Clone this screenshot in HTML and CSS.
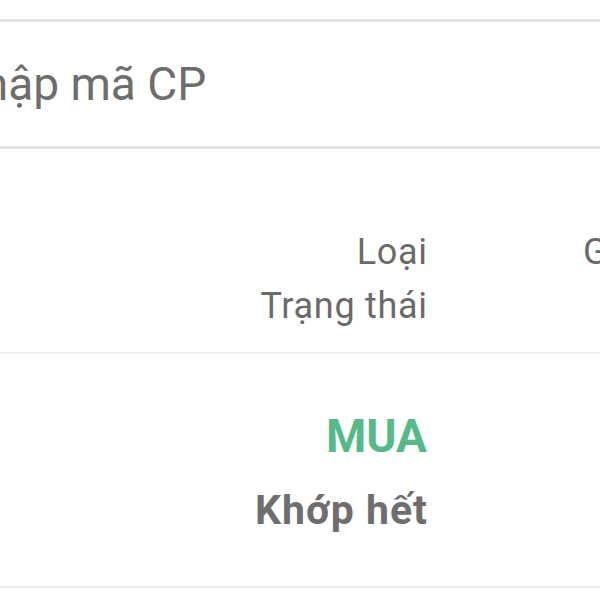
FILE: index.html
```html
<!DOCTYPE html>
<html lang="vi">
<head>
<meta charset="utf-8">
<link rel="stylesheet" href="styles.css">
</head>
<body>
<div class="screen">
  <div class="top-gap"></div>
  <div class="search">
    <span class="placeholder">Nhập mã CP</span>
  </div>
  <div class="table-head">
    <div class="col col-type">
      <div class="head-line">Loại</div>
      <div class="head-line">Trạng thái</div>
    </div>
    <div class="col col-price">
      <div class="head-line">Giá đặt</div>
    </div>
  </div>
  <div class="table-row">
    <div class="col col-type">
      <div class="side buy">MUA</div>
      <div class="status">Khớp hết</div>
    </div>
    <div class="col col-price"></div>
  </div>
</div>
</body>
</html>
```

FILE: styles.css
```css
html, body {
  margin: 0;
  padding: 0;
  background: #ffffff;
  overflow: hidden;
}
.screen {
  width: 600px;
  height: 600px;
  overflow: hidden;
  font-family: Roboto, "Noto Sans", sans-serif;
  color: #6b6b6b;
}
.top-gap {
  height: 19px;
}
.search {
  height: 124px;
  border-top: 3px solid #e4e4e4;
  border-bottom: 3px solid #e4e4e4;
  display: flex;
  align-items: center;
  white-space: nowrap;
}
.placeholder {
  margin-left: -50px;
  font-size: 46px;
  line-height: 54px;
  color: #6d6d6d;
}
.table-head {
  display: flex;
  padding: 76px 0 19px;
  border-bottom: 2px solid #f1f1f1;
  white-space: nowrap;
}
.col-type {
  width: 427px;
  flex: none;
  text-align: right;
}
.col-price {
  padding-left: 156px;
  flex: none;
}
.head-line {
  font-size: 36px;
  line-height: 54px;
  color: #6a6a6a;
  letter-spacing: 0.7px;
  margin-right: -0.7px;
}
.table-row {
  display: flex;
  padding: 52px 0 48px;
  border-bottom: 2px solid #ececec;
  white-space: nowrap;
}
.side {
  font-size: 46px;
  line-height: 60px;
  font-weight: 700;
}
.buy {
  color: #55b98a;
}
.status {
  margin-top: 16px;
  margin-right: -1px;
  font-size: 41px;
  line-height: 56px;
  font-weight: 700;
  color: #6e6e6e;
  letter-spacing: 1px;
}
```
